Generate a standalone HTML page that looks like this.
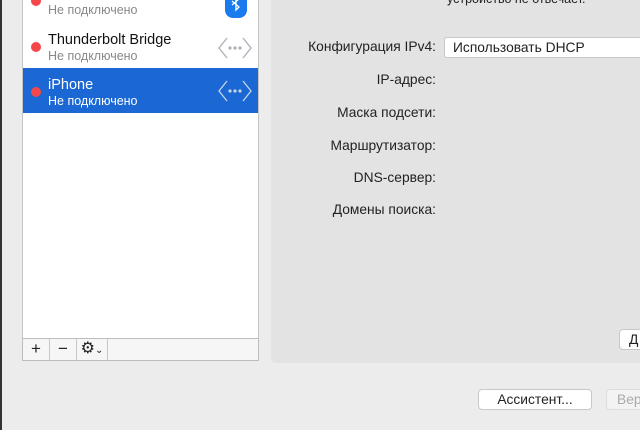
<!DOCTYPE html>
<html><head><meta charset="utf-8"><style>
*{margin:0;padding:0;box-sizing:border-box}
body{width:640px;height:430px;overflow:hidden;background:#ececec;font-family:"Liberation Sans","DejaVu Sans",sans-serif;font-size:13px;color:#222;position:relative}
.abs{position:absolute}
.list{left:22px;top:-2px;width:237px;height:342px;background:#fff;border:1px solid #c4c4c4;border-top:none}
.bar{left:22px;top:338px;width:237px;height:23px;background:#f6f6f6;border:1px solid #bdbdbd}
.bar div{position:absolute;top:0;height:21px;border-right:1px solid #c8c8c8;text-align:center;line-height:20px;font-size:17px;color:#222}
.dot{width:10px;height:10px;border-radius:50%;background:#f4474a}
.t1{font-size:14.5px;color:#111}
.t2{font-size:12.5px;color:#888}
.sel{left:23px;top:68px;width:235px;height:45px;background:#1b67d3}
.panel{left:271px;top:-5px;width:380px;height:368px;background:#e3e3e3;border-radius:5px}
.lbl{right:204px;font-size:13.8px;color:#222;text-align:right;white-space:nowrap}
.btn{background:#fff;border:1px solid #c8c8c8;border-radius:4px;font-size:13.8px;text-align:center;line-height:19px}
</style></head><body>
<div class="abs" style="left:0;top:0;width:2px;height:430px;background:#333"></div>
<div class="abs list"></div>
<div class="abs sel"></div>
<div class="abs dot" style="left:31px;top:-4px"></div>
<div class="abs t2" style="left:48px;top:3px">Не подключено</div>
<div class="abs" style="left:225px;top:-6px;width:22px;height:24px;background:#1a7bef;border-radius:0 0 8px 8px"></div>
<svg class="abs" style="left:229px;top:-4px" width="14" height="20" viewBox="0 0 14 20"><path d="M3 5 L10 11 L7 14 L7 0 L10 3 L3 9" fill="none" stroke="#fff" stroke-width="1.3"/></svg>
<div class="abs dot" style="left:31px;top:42px"></div>
<div class="abs t1" style="left:48px;top:32px">Thunderbolt Bridge</div>
<div class="abs t2" style="left:48px;top:49px">Не подключено</div>
<svg class="abs" style="left:218px;top:37px" width="34" height="22" viewBox="0 0 34 22"><path d="M9 1 L1 11 L9 21 M25 1 L33 11 L25 21" fill="none" stroke="#aab0b8" stroke-width="1.3"/><circle cx="12" cy="11" r="1.6" fill="#aab0b8"/><circle cx="17" cy="11" r="1.6" fill="#aab0b8"/><circle cx="22" cy="11" r="1.6" fill="#aab0b8"/></svg>
<div class="abs dot" style="left:31px;top:87px"></div>
<div class="abs t1" style="left:48px;top:77px;color:#fff">iPhone</div>
<div class="abs t2" style="left:48px;top:94px;color:#fff">Не подключено</div>
<svg class="abs" style="left:218px;top:80px" width="34" height="22" viewBox="0 0 34 22"><path d="M9 1 L1 11 L9 21 M25 1 L33 11 L25 21" fill="none" stroke="#c8d4e8" stroke-width="1.3"/><circle cx="12" cy="11" r="1.6" fill="#c8d4e8"/><circle cx="17" cy="11" r="1.6" fill="#c8d4e8"/><circle cx="22" cy="11" r="1.6" fill="#c8d4e8"/></svg>
<div class="abs bar">
<div style="left:0;width:27px">+</div>
<div style="left:27px;width:27px">−</div>
<div style="left:54px;width:31px;font-size:16px">⚙<span style="font-size:10px">⌄</span></div>
</div>
<div class="abs panel"></div>
<div class="abs" style="left:447px;top:-8px;font-size:12.5px">устройство не отвечает.</div>
<div class="abs lbl" style="top:39px">Конфигурация IPv4:</div>
<div class="abs btn" style="left:444px;top:37px;width:210px;height:21px;text-align:left;padding-left:8px;line-height:19px;border-radius:3px">Использовать DHCP</div>
<div class="abs lbl" style="top:72px">IP-адрес:</div>
<div class="abs lbl" style="top:105px">Маска подсети:</div>
<div class="abs lbl" style="top:138px">Маршрутизатор:</div>
<div class="abs lbl" style="top:170px">DNS-сервер:</div>
<div class="abs lbl" style="top:202px">Домены поиска:</div>
<div class="abs btn" style="left:619px;top:329px;width:40px;height:21px;text-align:left;padding-left:9px">Д</div>
<div class="abs btn" style="left:478px;top:389px;width:114px;height:21px">Ассистент...</div>
<div class="abs btn" style="left:606px;top:389px;width:60px;height:21px;color:#aaa;border-color:#ddd;background:#f3f3f3;text-align:left;padding-left:10px">Вернуть</div>
</body></html>
